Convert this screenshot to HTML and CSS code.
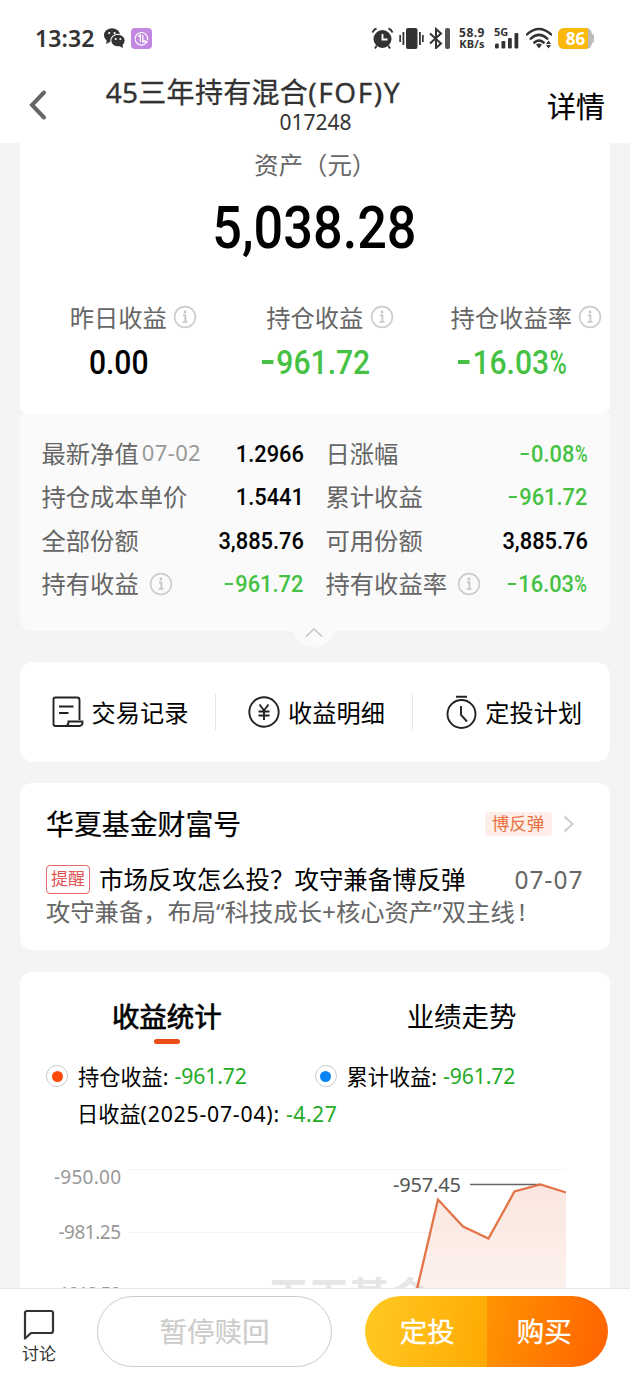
FILE: index.html
```html
<!DOCTYPE html>
<html lang="zh-CN">
<head>
<meta charset="utf-8">
<title>基金持仓</title>
<link rel="stylesheet" href="styles.css">
</head>
<body>
<svg class="defs" width="0" height="0">
  <symbol id="info" viewBox="0 0 24 24"><circle cx="12" cy="12" r="10.4" fill="none" stroke="#ccc" stroke-width="1.600"/><path d="M10 10.400h2.400v6.400M9.600 17h5" fill="none" stroke="#c4c4c4" stroke-width="1.700"/><circle cx="12" cy="7" r="1.400" fill="#c4c4c4"/></symbol>
</svg>
<div class="screen">
  <div class="status">
    <span class="clock">13:32</span>
    <svg class="wechat" width="21" height="20" viewBox="0 0 21 20">
      <ellipse cx="8" cy="7.3" rx="8" ry="7" fill="#333"/><path d="M3 12l-1 4 4-2z" fill="#333"/>
      <circle cx="5.2" cy="5" r="1.1" fill="#fff"/><circle cx="10.6" cy="5" r="1.1" fill="#fff"/>
      <ellipse cx="14" cy="12.6" rx="7.2" ry="6.3" fill="#333" stroke="#fff" stroke-width="1.1"/><path d="M15 18l4 2-.6-4z" fill="#333"/>
      <circle cx="11.7" cy="11" r="1" fill="#fff"/><circle cx="16.3" cy="11" r="1" fill="#fff"/>
    </svg>
    <svg class="appicon" width="21" height="21" viewBox="0 0 21 21">
      <rect width="21" height="21" rx="4" fill="#c287e0"/>
      <path d="M14.5 15.6A6.3 6.3 0 1 1 16.6 12" fill="none" stroke="#fff" stroke-width="1.2"/>
      <path d="M7.3 8.8l2-1.8v7M11.8 7v7l2-1.8" fill="none" stroke="#fff" stroke-width="1.3"/><circle cx="15" cy="14" r="1.6" fill="#fff"/>
    </svg>
    <svg class="sysicons" width="80" height="22" viewBox="371 26 80 22">
      <g fill="#333">
        <circle cx="382.500" cy="38" r="9"/><rect x="406" y="27" width="11.500" height="21" rx="2"/>
        <rect x="402.500" y="31" width="1.800" height="13"/><rect x="399.300" y="34" width="1.700" height="7"/>
        <rect x="419" y="31" width="1.800" height="13"/><rect x="422" y="34" width="1.700" height="7"/>
        <rect x="445" y="27" width="5" height="21" rx="2" fill="#555"/>
      </g>
      <path d="M382.500 33v5.500h5" fill="none" stroke="#fff" stroke-width="1.800"/>
      <path d="M372.500 31.500q1-3 4-4M392.500 31.500q-1-3-4-4M376.500 45l-1.500 2.500M388.500 45l1.500 2.500" fill="none" stroke="#333" stroke-width="1.900"/>
      <path d="M430 32.500l11 10-5 4.500v-19l5 4.500-11 10" fill="none" stroke="#333" stroke-width="2"/>
    </svg>
    <span class="speed"><span class="rate">58.9</span><span>KB/s</span></span>
    <span class="signal"><b>5G</b>
      <svg width="25" height="16" viewBox="0 0 25 16" fill="#333"><rect x="1" y="10.500" width="3.800" height="5" rx="1.200"/><rect x="7.500" y="8" width="3.800" height="7.500" rx="1.200"/><rect x="14" y="5" width="3.800" height="10.500" rx="1.200"/><rect x="20.500" y="0" width="3.800" height="15.500" rx="1.200"/></svg>
    </span>
    <svg class="wifi" width="26" height="22" viewBox="0 0 26 22">
      <path d="M1 7.400Q13-3.400 25 7.400M4.800 11.600Q13 4.200 21.200 11.600M8.400 15.500Q13 11.500 17.600 15.500" fill="none" stroke="#333" stroke-width="2.600" stroke-linecap="round"/>
      <path d="M10 17.500q3-2 6 0L13 21.500zM20 17l2.500-3.500 2.500 3.500zM20 18l2.500 3.500 2.500-3.500z" fill="#333"/>
    </svg>
    <span class="battery"><span class="shell"><span class="level">86</span></span></span>
  </div>
  <div class="header">
    <svg class="back" width="20" height="32" viewBox="0 0 20 32"><path d="M16 3.500L4 16l12 12.500" fill="none" stroke="#666" stroke-width="4" stroke-linecap="round"/></svg>
    <div class="titles"><div class="title">45三年持有混合<span class="fof">(FOF)Y</span></div><div class="code">017248</div></div>
    <div class="more">详情</div>
  </div>
  <div class="content">
    <div class="asset">
      <div class="asset-label">资产（元）</div>
      <div class="asset-value"><span class="num">5,038.28</span></div>
      <div class="cols">
        <div class="col"><span class="lbl">昨日收益<svg class="info"><use href="#info"/></svg></span><span class="val num">0.00</span></div>
        <div class="col"><span class="lbl">持仓收益<svg class="info"><use href="#info"/></svg></span><span class="val num green"><i class="dash"></i>961.72</span></div>
        <div class="col"><span class="lbl">持仓收益率<svg class="info"><use href="#info"/></svg></span><span class="val num green"><i class="dash"></i>16.03<span class="pct">%</span></span></div>
      </div>
    </div>
    <div class="detail">
      <div class="cell"><span>最新净值<em>07-02</em></span><b class="num">1.2966</b></div>
      <div class="cell"><span>日涨幅</span><b class="num green"><i class="dash"></i>0.08<span class="pct">%</span></b></div>
      <div class="cell"><span>持仓成本单价</span><b class="num">1.5441</b></div>
      <div class="cell"><span>累计收益</span><b class="num green"><i class="dash"></i>961.72</b></div>
      <div class="cell"><span>全部份额</span><b class="num">3,885.76</b></div>
      <div class="cell"><span>可用份额</span><b class="num">3,885.76</b></div>
      <div class="cell"><span>持有收益<svg class="info"><use href="#info"/></svg></span><b class="num green"><i class="dash"></i>961.72</b></div>
      <div class="cell"><span>持有收益率<svg class="info"><use href="#info"/></svg></span><b class="num green"><i class="dash"></i>16.03<span class="pct">%</span></b></div>
      <svg class="handle" width="44" height="44" viewBox="0 0 44 44"><circle cx="22" cy="22" r="21.500" fill="#fafafa"/><path d="M14 32.500l8-7.500 8 7.500" fill="none" stroke="#c4c4c4" stroke-width="1.600"/></svg>
    </div>
    <div class="actions">
      <div class="action"><svg width="32" height="32" viewBox="0 0 32 32" fill="none" stroke="#222" stroke-width="1.900"><path d="M14 30H3.500Q1.500 30 1.500 28V3Q1.500 1.500 3.500 1.500H25Q27.500 1.500 27.500 4V24M14 30q2.500-.5 2.500-4.500h14Q31 30 27 30H10M7 10.500h14.500M7 17h9.500"/></svg><span>交易记录</span></div>
      <div class="action"><svg width="32" height="32" viewBox="0 0 32 32" fill="none" stroke="#222" stroke-width="1.900"><circle cx="16" cy="16" r="14.700"/><path d="M11.500 8.500l4.500 6 4.500-6M16 14.500V24M10.500 15.500h11M10.500 19.500h11"/></svg><span>收益明细</span></div>
      <div class="action"><svg width="32" height="34" viewBox="0 0 32 34" fill="none" stroke="#222" stroke-width="1.900"><circle cx="16.500" cy="19" r="14"/><path d="M11 1.700h11M16 11v9l6 6.500"/></svg><span>定投计划</span></div>
    </div>
    <div class="news">
      <div class="news-head"><span class="news-title">华夏基金财富号</span><span class="tag">博反弹</span><svg width="11" height="18" viewBox="0 0 11 18"><path d="M1.500 1.500L9.500 9l-8 7.500" fill="none" stroke="#ccc" stroke-width="2"/></svg></div>
      <div class="news-row"><span class="badge">提醒</span><span class="headline">市场反攻怎么投？攻守兼备博反弹</span><span class="date">07-07</span></div>
      <div class="news-sub">攻守兼备，布局“科技成长+核心资产”双主线<span class="bang">!</span></div>
    </div>
    <div class="stats">
      <div class="tabs"><div class="tab active">收益统计</div><div class="tab">业绩走势</div></div>
      <div class="legend">
        <div class="item"><i class="ring red"></i><span class="name">持仓收益:</span><span class="delta">-961.72</span></div>
        <div class="item"><i class="ring blue"></i><span class="name">累计收益:</span><span class="delta">-961.72</span></div>
      </div>
      <div class="daily"><span class="name">日收益<span class="day">(2025-07-04):</span></span><span class="delta">-4.27</span></div>
      <svg class="chart" width="590" height="138" viewBox="20 1150 590 138">
        <defs><linearGradient id="area" x1="0" y1="0" x2="0" y2="1"><stop offset="0" stop-color="#fae6df"/><stop offset="1" stop-color="#fdf1ed"/></linearGradient></defs>
        <path d="M129 1169.500H566M129 1232.500H566" stroke="#f4f4f4"/>
        <path d="M417 1288L438 1199.500 463 1226.500 488.500 1238.500 514.500 1191.500 540.500 1184.500 566 1192.500V1288z" fill="url(#area)"/>
        <text class="watermark" x="268" y="1312">天天基金</text>
        <path d="M470 1184.500H541" stroke="#666" stroke-width="1.600"/>
        <path d="M417 1289L438 1199.500 463 1226.500 488.500 1238.500 514.500 1191.500 540.500 1184.500 566 1192.500" fill="none" stroke="#e37447" stroke-width="2.300"/>
        <g class="axis"><text x="54" y="1184" textLength="67">-950.00</text><text x="58.500" y="1238.500" textLength="62.500">-981.25</text><text x="54" y="1301" textLength="67">-1012.50</text></g>
        <text class="peak" x="393" y="1191.500" textLength="68">-957.45</text>
      </svg>
    </div>
  </div>
  <div class="bottom">
    <div class="discuss"><svg width="32" height="32" viewBox="0 0 32 32"><path d="M2 29.500V4Q2 2 4 2H28Q30 2 30 4V22Q30 24 28 24H8z" fill="none" stroke="#333" stroke-width="2.200" stroke-linejoin="round"/></svg><span>讨论</span></div>
    <div class="redeem">暂停赎回</div>
    <div class="buy"><div class="plan">定投</div><div class="purchase">购买</div></div>
  </div>
</div>
</body>
</html>
```
FILE: styles.css
```css
* { box-sizing: border-box; }
body { margin: 0; background: #fff; font-family: "Noto Sans", "Noto Sans CJK SC", sans-serif; color: #000; }
.defs { position: absolute; }
svg { display: block; flex: none; }
.screen { width: 630px; height: 1400px; overflow: hidden; display: flex; flex-direction: column; white-space: nowrap; }

.status { height: 76px; flex: none; display: flex; align-items: center; padding: 0 34px 0 35px; color: #333; }
.clock { width: 69px; font: 600 23px/30px "Noto Sans", sans-serif; letter-spacing: .1px; }
.appicon { margin-left: 6px; }
.sysicons { margin-left: 219px; }
.speed { width: 30px; margin-left: 6px; display: flex; flex-direction: column; align-items: center; font: 700 11px/11px "Noto Sans", sans-serif; letter-spacing: .2px; }
.rate { font-size: 12px; letter-spacing: .5px; }
.signal { width: 26px; height: 22px; margin-left: 7px; font-size: 11px; line-height: 9px; }
.signal b { display: block; height: 6px; }
.wifi { margin-left: 6px; }
.battery { display: flex; align-items: center; margin-left: 6px; flex: none; }
.battery::after { content: ""; width: 2px; height: 9px; border-radius: 0 2px 2px 0; background: #bbb; }
.shell { display: block; width: 34px; height: 21px; border-radius: 6px; background: #bbb; overflow: hidden; }
.level { display: block; width: 30px; height: 21px; padding-left: 5px; text-align: center; background: #fbb90d; color: #fff; font: 700 17px/21px "Noto Sans", sans-serif; }

.header { height: 67px; flex: none; display: flex; padding: 0 25px 0 28px; }
.back { margin-top: 13px; }
.titles { flex: 1; padding-left: 31px; text-align: center; color: #333; }
.title { font-size: 28px; line-height: 33px; height: 34px; margin-right: 119px; letter-spacing: .3px; -webkit-text-stroke: .3px #333; }
.fof { letter-spacing: 1.600px; }
.code { font-size: 21px; line-height: 24px; margin-left: 5px; }
.more { width: 58px; font-size: 29px; line-height: 61px; -webkit-text-stroke: .2px #000; }

.content { height: 1145px; flex: none; background: #f4f4f4; padding: 0 20.500px 0 20px; overflow: hidden; }
.num { font-family: Roboto, sans-serif; font-weight: 500; display: inline-flex; align-items: center; transform: scaleX(.91); }
.green { color: #45c143; }
.dash { width: .39em; height: .1em; margin-right: .09em; background: currentColor; }
.pct { transform: scaleX(.78); transform-origin: right; font-weight: 500; margin-left: -.14em; }
.info { width: 24px; height: 24px; }

.asset { height: 271px; background: #fff; border-radius: 0 0 8px 8px; text-align: center; color: #666; }
.asset-label { font-size: 24.400px; line-height: 44px; padding-left: 1px; }
.asset-value { height: 90px; line-height: 76px; font-size: 59px; color: #000; }
.asset-value .num { transform: scaleX(.885); }
.cols { display: grid; grid-template-columns: repeat(3, 1fr); padding-top: 20px; }
.col { display: flex; flex-direction: column; align-items: center; }
.lbl { position: relative; font-size: 24.300px; line-height: 41px; height: 40px; }
.lbl .info { position: absolute; left: calc(100% + 6.500px); top: 8px; }
.val { font-size: 34px; line-height: 50px; color: #000; transform: scaleX(.885); }
.val.green { color: #45c143; padding-left: 2px; }

.detail { position: relative; height: 217px; background: #fafafa; border-radius: 0 0 12px 12px; padding: 17.500px 22px 0 21.500px; display: grid; grid-template-columns: 262px 262px; column-gap: 22px; grid-auto-rows: 43.500px; }
.cell { display: flex; justify-content: space-between; align-items: center; font-size: 24.300px; color: #666; }
.cell > span { display: flex; align-items: center; margin-top: -2px; }
.cell .info { margin: 2px 0 0 10px; }
.cell em { font-style: normal; font-size: 22px; color: #999; margin-left: 3px; letter-spacing: .4px; }
.cell b { color: #000; font-size: 24px; transform-origin: right; transform: scaleX(.91); padding-top: 1px; }
.cell b.green { color: #45c143; }
.handle { position: absolute; left: 272px; top: 190px; }

.actions { height: 100px; margin-top: 31px; background: #fff; border-radius: 14px; display: grid; grid-template-columns: 195px 197px 1fr; align-items: center; }
.action { display: flex; justify-content: center; align-items: center; gap: 8px; height: 36px; font-size: 24.200px; padding-left: 5px; }
.action span { margin-top: -2px; }
.action + .action { border-left: 1px solid #e6e6e6; }

.news { height: 167px; margin-top: 21px; background: #fff; border-radius: 12px; padding: 22px 26px 0; }
.news-head { display: flex; align-items: center; height: 38px; }
.news-title { font-size: 27.900px; flex: 1; margin-top: -2px; -webkit-text-stroke: .2px #000; }
.tag { width: 67px; height: 24px; margin-right: 11px; border-radius: 4px; background: #fdeee9; color: #ea713f; font-size: 17.500px; line-height: 23px; text-align: center; }
.news-head svg { margin-right: 10px; }
.news-row { display: flex; align-items: center; height: 34px; margin-top: 19px; }
.badge { width: 44px; height: 29px; border: 1.500px solid #e56a6a; border-radius: 4px; color: #df5555; font-size: 17px; line-height: 25px; text-align: center; margin-right: 9px; }
.headline { font-size: 24.450px; flex: 1; margin-top: -1px; }
.date { font-size: 24.500px; color: #666; letter-spacing: 1px; margin-right: 0; }
.news-sub { font-size: 24.300px; line-height: 32px; color: #666; }
.bang { margin-left: 4px; }

.stats { height: 400px; margin-top: 22px; background: #fff; border-radius: 12px 12px 0 0; }
.tabs { display: grid; grid-template-columns: 1fr 1fr; height: 85px; padding-top: 24px; text-align: center; }
.tab { font-size: 27.500px; line-height: 42px; height: 40px; margin-right: 1px; }
.active { -webkit-text-stroke: .7px #000; }
.active::after { content: ""; display: block; width: 26px; height: 5px; border-radius: 3px; background: #ea4e15; margin: 1px auto 0; }
.legend { display: grid; grid-template-columns: 268.500px 1fr; height: 38px; padding-left: 26px; font-size: 21.200px; }
.item { display: flex; align-items: center; }
.item span { margin-top: -1px; }
.ring { width: 22px; height: 22px; border: 1px solid #ccc; border-radius: 50%; display: grid; place-items: center; margin-right: 10px; }
.ring::after { content: ""; width: 11px; height: 11px; border-radius: 50%; background: #fa4a0a; }
.blue::after { background: #0a84f5; }
.name { margin-right: 6px; }
.day { letter-spacing: .8px; }
.delta { color: #23ab26; letter-spacing: -.1px; }
.daily { font-size: 21.200px; line-height: 38px; height: 55px; padding-left: 57px; }
.daily .delta { letter-spacing: .5px; }
.axis { font: 19px "Noto Sans", sans-serif; fill: #999; }
.peak { font: 20px "Noto Sans", sans-serif; fill: #555; }
.watermark { font: 700 41px "Noto Sans CJK SC", sans-serif; letter-spacing: -.6px; fill: #888; opacity: .2; }

.bottom { height: 112px; flex: none; border-top: 1px solid #e8e8e8; display: flex; padding: 7px 22px 0 22px; background: #fff; }
.discuss { width: 34px; margin-right: 41px; padding-top: 13px; font-size: 17px; line-height: 25px; color: #333; }
.discuss svg { margin-left: 1px; }
.redeem { width: 235px; height: 71px; border: 1px solid #ccc; border-radius: 36px; color: #ccc; font-size: 27.500px; line-height: 69px; text-align: center; -webkit-text-stroke: .2px #ccc; }
.buy { width: 243px; height: 71px; margin-left: 33px; border-radius: 36px; overflow: hidden; display: grid; grid-template-columns: 1fr 1fr; color: #fff; font-size: 27.500px; line-height: 71px; text-align: center; -webkit-text-stroke: .3px #fff; }
.plan { background: linear-gradient(100deg, #ffca22, #ffa903); padding-left: 3px; }
.purchase { background: linear-gradient(100deg, #ff9402, #ff6200); padding-right: 6px; }
```
